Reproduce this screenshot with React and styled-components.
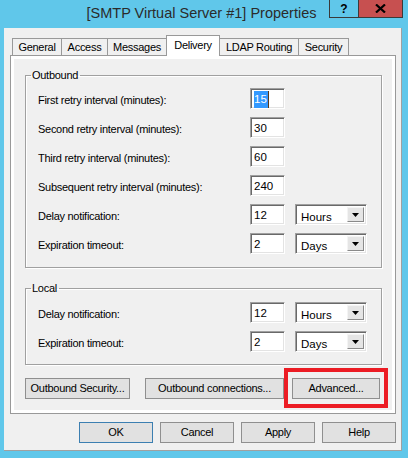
import React from 'react';
import styled, { createGlobalStyle } from 'styled-components';

const Global = createGlobalStyle`
  html, body { margin: 0; padding: 0; }
  body {
    background: #60c7ea;
    font-family: "Liberation Sans", Arial, sans-serif;
  }
`;

const Frame = styled.div`
  width: 408px;
  height: 458px;
  background: #60c7ea;
  display: flex;
  flex-direction: column;
  overflow: hidden;
`;

const TitleBar = styled.div`
  height: 28px;
  flex: none;
  display: flex;
  align-items: flex-start;
`;

const Title = styled.div`
  flex: 1;
  padding-left: 74px;
  text-align: center;
  font-size: 14.5px;
  line-height: 26px;
  color: #2b2b2b;
  white-space: nowrap;
`;

const CaptionButtons = styled.div`
  display: flex;
  margin-right: 5px;
`;

const CaptionButton = styled.div`
  width: ${(p) => p.$w}px;
  height: 18px;
  box-sizing: border-box;
  border: 1px solid #3a3a3a;
  border-top: 0;
  ${(p) => (p.$noRight ? 'border-right: 0;' : '')}
  background: ${(p) => p.$bg};
  display: flex;
  align-items: center;
  justify-content: center;
  font-weight: bold;
  font-size: 12px;
  color: #000;
`;

const Client = styled.div`
  flex: 1;
  margin: 0 6px 7px 4px;
  background: #f0f0f0;
  border-right: 1px solid #a0a0a0;
  border-bottom: 1px solid #a0a0a0;
  display: flex;
  flex-direction: column;
  padding: 7px 5px 7px 6px;
`;

const TabStrip = styled.div`
  height: 20px;
  flex: none;
  display: flex;
  align-items: flex-end;
  padding-left: 2px;
`;

const Tab = styled.div`
  width: ${(p) => p.$w}px;
  box-sizing: border-box;
  height: ${(p) => (p.$active ? 21 : 17)}px;
  margin-bottom: ${(p) => (p.$active ? -1 : 0)}px;
  margin-left: -1px;
  &:first-child { margin-left: 0; }
  position: relative;
  z-index: ${(p) => (p.$active ? 2 : 1)};
  border: 1px solid #999;
  border-bottom: 0;
  background: ${(p) => (p.$active ? '#ffffff' : '#f0f0f0')};
  font-size: 11px;
  letter-spacing: -0.28px;
  line-height: 17px;
  padding-top: ${(p) => (p.$active ? 1 : 0)}px;
  text-align: center;
  color: #000;
  white-space: nowrap;
`;

const Panel = styled.div`
  flex: 1;
  border: 1px solid #999;
  background: #ffffff;
  padding: 3px;
  display: flex;
`;

const Page = styled.div`
  flex: 1;
  background: #f0f0f0;
  display: flex;
  flex-direction: column;
  padding: 10px 10px 0 11px;
`;

const Group = styled.fieldset`
  margin: ${(p) => p.$mt || 0}px 0 0 0;
  padding: ${(p) => p.$pt}px 0 ${(p) => p.$pb}px 12px;
  border: 1px solid #a0a0a0;
  box-shadow: 1px 1px 0 #ffffff, inset 1px 1px 0 #ffffff;
  min-width: 0;
  display: flex;
  flex-direction: column;
  gap: 8px;
`;

const Legend = styled.legend`
  margin-left: -7px;
  padding: 0 2px 0 1px;
  font-size: 11px;
  letter-spacing: -0.28px;
  line-height: 13px;
  color: #000;
`;

const Row = styled.div`
  display: flex;
  align-items: center;
  height: 21px;
`;

const Label = styled.div`
  width: 212px;
  font-size: 11px;
  letter-spacing: -0.28px;
  line-height: 13px;
  margin-top: 4px;
  color: #000;
  white-space: nowrap;
`;

const sunken = `
  box-sizing: border-box;
  border-top: 1px solid #a0a0a0;
  border-left: 1px solid #a0a0a0;
  border-right: 1px solid #ffffff;
  border-bottom: 1px solid #ffffff;
  box-shadow: inset 1px 1px 0 #696969, inset -1px -1px 0 #e3e3e3;
  background: #ffffff;
`;

const TextBox = styled.div`
  ${sunken}
  width: 35px;
  height: 21px;
  padding: 2px 0 0 3px;
  font-size: 11.5px;
  line-height: 16px;
  color: #000;
  display: flex;
`;

const Selected = styled.span`
  background: #3399ff;
  color: #ffffff;
  padding: 0 1px 0 0;
  border-right: 1px solid #5a3a1a;
`;

const Combo = styled.div`
  ${sunken}
  width: 72px;
  height: 21px;
  margin-left: 10px;
  display: flex;
  align-items: stretch;
  padding: 2px 2px 2px 5px;
`;

const ComboText = styled.div`
  flex: 1;
  font-size: 11.5px;
  line-height: 18px;
  padding-top: 1px;
  color: #000;
`;

const ComboArrow = styled.div`
  width: 17px;
  box-sizing: border-box;
  background: #e5e5e5;
  border-top: 1px solid #f4f4f4;
  border-left: 1px solid #f4f4f4;
  border-right: 1px solid #8a8a8a;
  border-bottom: 1px solid #8a8a8a;
  display: flex;
  align-items: center;
  justify-content: center;
`;

const ActionRow = styled.div`
  display: flex;
  margin-top: 13px;
  height: 21px;
`;

const Button = styled.div`
  width: ${(p) => p.$w}px;
  margin-left: ${(p) => p.$ml || 0}px;
  height: 21px;
  box-sizing: border-box;
  border: 1px solid ${(p) => (p.$default ? '#3c7fb1' : '#8f8f8f')};
  background: #e1e1e1;
  font-size: 11px;
  letter-spacing: -0.28px;
  line-height: 19px;
  text-align: center;
  color: #000;
  white-space: nowrap;
  position: relative;
`;

const Highlight = styled.div`
  position: relative;
  display: flex;
  margin-left: 8px;
  &::after {
    content: '';
    position: absolute;
    top: -10px;
    left: -8px;
    right: -8px;
    bottom: -9px;
    border: 4px solid #ec1c24;
    pointer-events: none;
  }
`;

const Footer = styled.div`
  display: flex;
  justify-content: flex-end;
  gap: 7px;
  margin-top: 8px;
  flex: none;
`;

const tabs = [
  { name: 'General', w: 50 },
  { name: 'Access', w: 47 },
  { name: 'Messages', w: 60 },
  { name: 'Delivery', w: 54, active: true },
  { name: 'LDAP Routing', w: 80 },
  { name: 'Security', w: 51 },
];

const outbound = [
  { label: 'First retry interval (minutes):', value: '15', selected: true },
  { label: 'Second retry interval (minutes):', value: '30' },
  { label: 'Third retry interval (minutes):', value: '60' },
  { label: 'Subsequent retry interval (minutes):', value: '240' },
  { label: 'Delay notification:', value: '12', unit: 'Hours' },
  { label: 'Expiration timeout:', value: '2', unit: 'Days' },
];

const local = [
  { label: 'Delay notification:', value: '12', unit: 'Hours' },
  { label: 'Expiration timeout:', value: '2', unit: 'Days' },
];

function Arrow() {
  return (
    <svg width="7" height="4" viewBox="0 0 7 4">
      <path d="M0 0 H7 L3.5 4 Z" fill="#000" />
    </svg>
  );
}

function FieldRow({ label, value, unit, selected }) {
  return (
    <Row>
      <Label>{label}</Label>
      <TextBox>{selected ? <Selected>{value}</Selected> : value}</TextBox>
      {unit && (
        <Combo>
          <ComboText>{unit}</ComboText>
          <ComboArrow>
            <Arrow />
          </ComboArrow>
        </Combo>
      )}
    </Row>
  );
}

export default function App() {
  return (
    <>
      <Global />
      <Frame>
        <TitleBar>
          <Title>[SMTP Virtual Server #1] Properties</Title>
          <CaptionButtons>
            <CaptionButton $w={29} $bg="#60c7ea" $noRight>?</CaptionButton>
            <CaptionButton $w={45} $bg="#c75050">
              <svg width="11" height="9" viewBox="0 0 11 9">
                <path d="M1 0.5 L10 8.5 M10 0.5 L1 8.5" stroke="#000" strokeWidth="2.2" />
              </svg>
            </CaptionButton>
          </CaptionButtons>
        </TitleBar>
        <Client>
          <TabStrip>
            {tabs.map((t) => (
              <Tab key={t.name} $w={t.w} $active={t.active}>
                {t.name}
              </Tab>
            ))}
          </TabStrip>
          <Panel>
            <Page>
              <Group $pt={6} $pb={13}>
                <Legend>Outbound</Legend>
                {outbound.map((r) => (
                  <FieldRow key={r.label} {...r} />
                ))}
              </Group>
              <Group $mt={14} $pt={7} $pb={12}>
                <Legend>Local</Legend>
                {local.map((r) => (
                  <FieldRow key={r.label} {...r} />
                ))}
              </Group>
              <ActionRow>
                <Button $w={105}>Outbound Security...</Button>
                <Button $w={139} $ml={15}>Outbound connections...</Button>
                <Highlight>
                  <Button $w={88}>Advanced...</Button>
                </Highlight>
              </ActionRow>
            </Page>
          </Panel>
          <Footer>
            <Button $w={74} $default>OK</Button>
            <Button $w={74}>Cancel</Button>
            <Button $w={74}>Apply</Button>
            <Button $w={74}>Help</Button>
          </Footer>
        </Client>
      </Frame>
    </>
  );
}
